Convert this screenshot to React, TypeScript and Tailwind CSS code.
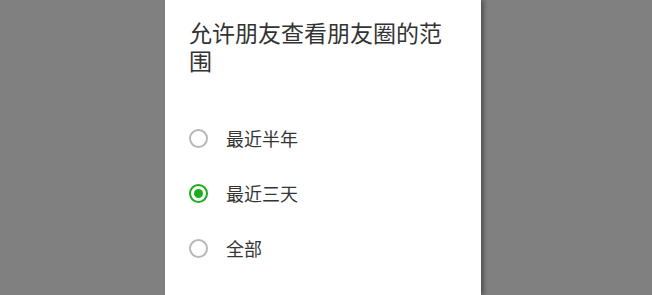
import React, { useState } from 'react';

const options = ['最近半年', '最近三天', '全部'];

const Radio: React.FC<{ checked: boolean }> = ({ checked }) => (
  <span
    className={
      checked
        ? 'flex h-[19px] w-[19px] items-center justify-center rounded-full border-2 border-[#1aad19]'
        : 'flex h-[19px] w-[19px] items-center justify-center rounded-full border-2 border-[#b8b8b8]'
    }
  >
    {checked && <span className="h-[9px] w-[9px] rounded-full bg-[#1aad19]" />}
  </span>
);

export default function App() {
  const [selected, setSelected] = useState(1);

  return (
    <div
      className="flex h-[295px] w-[652px] justify-start overflow-hidden bg-[#808080]"
      style={{ fontFamily: '"Noto Sans CJK SC", "Noto Sans", sans-serif' }}
    >
      <div className="ml-[165px] h-full w-[316px] bg-white pt-[18px] shadow-[3px_0_4px_rgba(0,0,0,0.35)]">
        <h1 className="px-6 text-[23px] leading-[28px] text-[#333333]">允许朋友查看朋友圈的范围</h1>
        <ul className="mt-[37px]">
          {options.map((o, i) => (
            <li
              key={o}
              onClick={() => setSelected(i)}
              className="flex h-[55px] cursor-pointer items-center px-6"
            >
              <Radio checked={selected === i} />
              <span className="ml-[18px] text-[18px] text-[#353535]">{o}</span>
            </li>
          ))}
        </ul>
      </div>
    </div>
  );
}
